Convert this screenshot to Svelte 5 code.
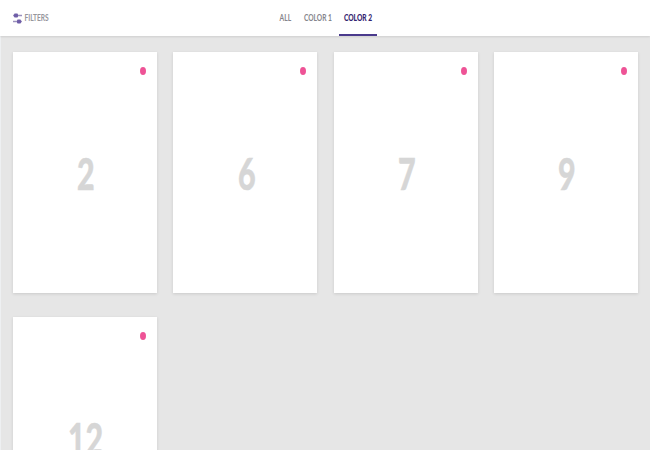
<script lang="ts">
	const tabs = [
		{ label: 'ALL', active: false },
		{ label: 'COLOR 1', active: false },
		{ label: 'COLOR 2', active: true }
	];

	const cards = [2, 6, 7, 9, 12];
</script>

<div class="page">
	<header class="topbar">
		<div class="filters">
			<svg width="9" height="11" viewBox="0 0 9 11" aria-hidden="true">
				<path d="M0 2.5h9M0 8.5h9" stroke="#9a90bd" stroke-width="1.3" />
				<rect x="1" y="0.5" width="4" height="4" rx="1" fill="#6f5ea8" />
				<rect x="4" y="6.5" width="4" height="4" rx="1" fill="#6f5ea8" />
			</svg>
			<span class="filters-label"><span class="squeeze">FILTERS</span></span>
		</div>
		<nav class="tabs">
			{#each tabs as tab}
				<span class="tab" class:active={tab.active}><span class="squeeze">{tab.label}</span></span>
			{/each}
		</nav>
	</header>

	<main class="grid">
		{#each cards as card}
			<article class="card">
				<span class="dot"></span>
				<span class="number">{card}</span>
			</article>
		{/each}
	</main>
</div>

<style>
	:global(body) {
		margin: 0;
		background: #e6e6e6;
		overflow: hidden;
	}

	.page {
		height: 450px;
		overflow: hidden;
		font-family: Lato, sans-serif;
		background: #e6e6e6;
	}

	.topbar {
		position: relative;
		height: 36px;
		background: #fff;
		box-shadow: 0 1px 2px rgba(0, 0, 0, 0.1);
	}

	.filters {
		position: absolute;
		left: 13px;
		top: 12px;
		display: flex;
		align-items: center;
		gap: 3px;
		height: 12px;
		font-size: 8.5px;
		font-weight: 700;
		color: #96969c;
	}

	.filters-label {
		display: flex;
		justify-content: center;
		width: 23px;
	}

	/* the source font is a condensed one, none is installed */
	.squeeze {
		display: block;
		flex-shrink: 0;
		white-space: nowrap;
		transform: scaleX(0.78);
	}

	.tabs {
		display: flex;
		justify-content: center;
		gap: 2px;
		height: 36px;
	}

	.tab {
		display: flex;
		align-items: center;
		justify-content: center;
		box-sizing: border-box;
		width: 38px;
		height: 36px;
		padding-top: 2px;
		font-size: 8.5px;
		font-weight: 700;
		color: #85858c;
		border-bottom: 2px solid transparent;
	}

	.tab:first-child {
		width: 23px;
	}

	.tab.active {
		color: #33236f;
		font-weight: 900;
		border-bottom-color: #4a3a8c;
	}

	.grid {
		display: grid;
		grid-template-columns: repeat(4, 144px);
		column-gap: 16.3px;
		row-gap: 24px;
		padding: 16px 13px 0 12px;
		border-left: 1px solid #eef0f2;
	}

	.card {
		position: relative;
		box-sizing: border-box;
		height: 241px;
		padding-left: 2px;
		display: flex;
		align-items: center;
		justify-content: center;
		background: #fff;
		box-shadow: 0 1px 3px rgba(0, 0, 0, 0.12);
	}

	.dot {
		position: absolute;
		top: 15px;
		right: 11px;
		width: 6px;
		height: 8px;
		border-radius: 50%;
		background: #ee5396;
	}

	.number {
		font-size: 44px;
		font-weight: 900;
		color: #d6d6d6;
		-webkit-text-stroke: 0.5px #d6d6d6;
		transform: scaleX(0.69);
	}
</style>
